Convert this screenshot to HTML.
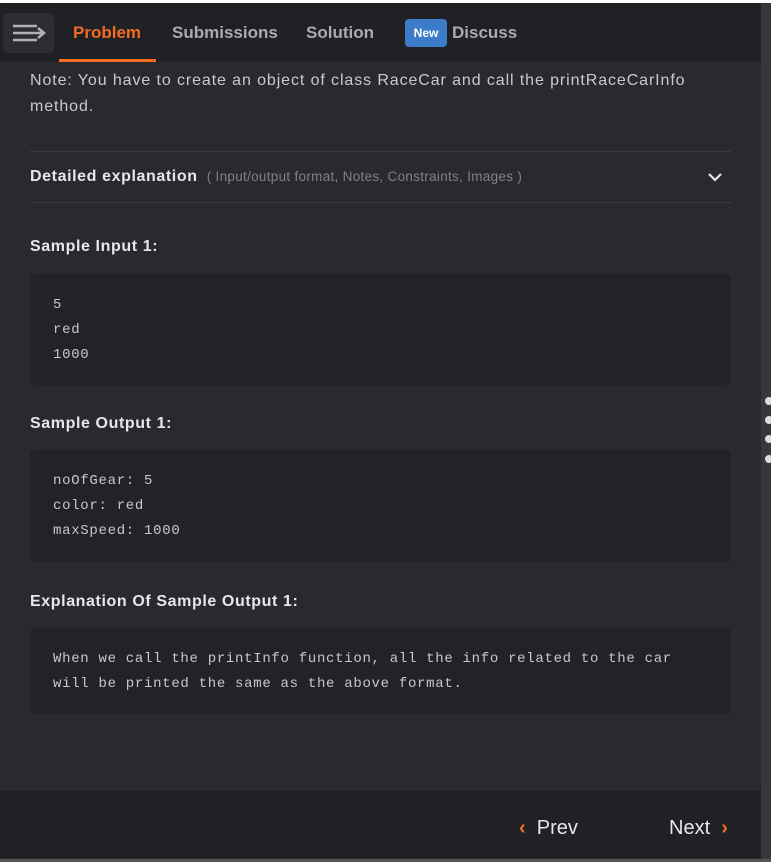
<!DOCTYPE html>
<html><head><style>
*{margin:0;padding:0;box-sizing:border-box}
body{width:771px;height:862px;background:#fff;font-family:"Liberation Sans",sans-serif;position:relative;overflow:hidden}
.main{position:absolute;left:0;top:3px;width:761px;height:856px;background:#282a2e}
.side{position:absolute;left:761px;top:3px;width:10px;height:856px;background:#36383c}
.dot{position:absolute;left:765px;width:8px;height:8px;border-radius:50%;background:#ddd}
.nav{position:absolute;left:0;top:0;width:761px;height:59px;background:#1f2124}
.menu{position:absolute;left:3px;top:10px;width:51px;height:40px;background:#2b2d31;border-radius:5px}
.tab{position:absolute;top:20px;font-size:17px;font-weight:bold;color:#a9abaf}
.new{position:absolute;left:405px;top:16px;width:42px;height:28px;background:#3d7cc9;border-radius:4px;color:#fff;font-size:12px;font-weight:bold;text-align:center;line-height:28px}
.txt{position:absolute;left:30px;color:#c8cacd;font-size:16px;letter-spacing:0.9px}
h3{position:absolute;left:30px;font-size:16px;color:#e6e7e9;font-weight:bold;letter-spacing:0.6px}
.code{position:absolute;left:30px;width:701px;background:#212327;border-radius:5px;font-family:"Liberation Mono",monospace;font-size:14px;letter-spacing:0.7px;color:#c6c8cb;padding:19px 0 0 23px;line-height:25px}
.foot{position:absolute;left:0;top:788px;width:761px;height:67px;background:#1f2124}
.fb{position:absolute;top:26px;font-size:20px;color:#e6e7e9}
.or{color:#f26b21;font-weight:bold}
</style></head><body>
<div class="main">
<div class="nav">
<div class="menu"><svg width="51" height="40"><g stroke="#b0b2b5" stroke-width="2.5" fill="none"><path d="M10 13H34M10 20H40M10 27H34"/><path d="M35 15L41 20L35 25"/></g></svg></div>
<div class="tab" style="left:73px;color:#f26b21">Problem</div>
<div style="position:absolute;left:59px;top:56px;width:97px;height:3px;background:#f26b21"></div>
<div class="tab" style="left:172px">Submissions</div>
<div class="tab" style="left:306px">Solution</div>
<div class="new">New</div>
<div class="tab" style="left:452px">Discuss</div>
</div>
<div class="txt" style="top:65px;line-height:26px">Note: You have to create an object of class RaceCar and call the printRaceCarInfo<br>method.</div>
<div style="position:absolute;left:30px;top:148px;width:701px;height:1px;background:#3a3c40"></div>
<h3 style="top:165px">Detailed explanation <span style="font-weight:normal;font-size:13.5px;letter-spacing:0.3px;color:#7f8286">&nbsp;( Input/output format, Notes, Constraints, Images )</span></h3>
<svg style="position:absolute;left:707px;top:168px" width="16" height="12"><path d="M2 3L8 9L14 3" stroke="#e6e7e9" stroke-width="2.2" fill="none"/></svg>
<div style="position:absolute;left:30px;top:199px;width:701px;height:1px;background:#3a3c40"></div>
<h3 style="top:235px">Sample Input 1:</h3>
<div class="code" style="top:271px;height:111px">5<br>red<br>1000</div>
<h3 style="top:412px">Sample Output 1:</h3>
<div class="code" style="top:447px;height:112px">noOfGear: 5<br>color: red<br>maxSpeed: 1000</div>
<h3 style="top:590px">Explanation Of Sample Output 1:</h3>
<div class="code" style="top:625px;height:86px">When we call the printInfo function, all the info related to the car<br>will be printed the same as the above format.</div>
<div class="foot">
<div class="fb" style="left:519px"><span class="or">‹</span>&nbsp; Prev</div>
<div class="fb" style="left:669px">Next&nbsp; <span class="or">›</span></div>
</div>
</div>
<div class="side"></div>
<div class="dot" style="top:397px"></div><div class="dot" style="top:416px"></div><div class="dot" style="top:435px"></div><div class="dot" style="top:455px"></div>
<div style="position:absolute;left:0;top:859px;width:771px;height:3px;background:#555"></div>
</body></html>
